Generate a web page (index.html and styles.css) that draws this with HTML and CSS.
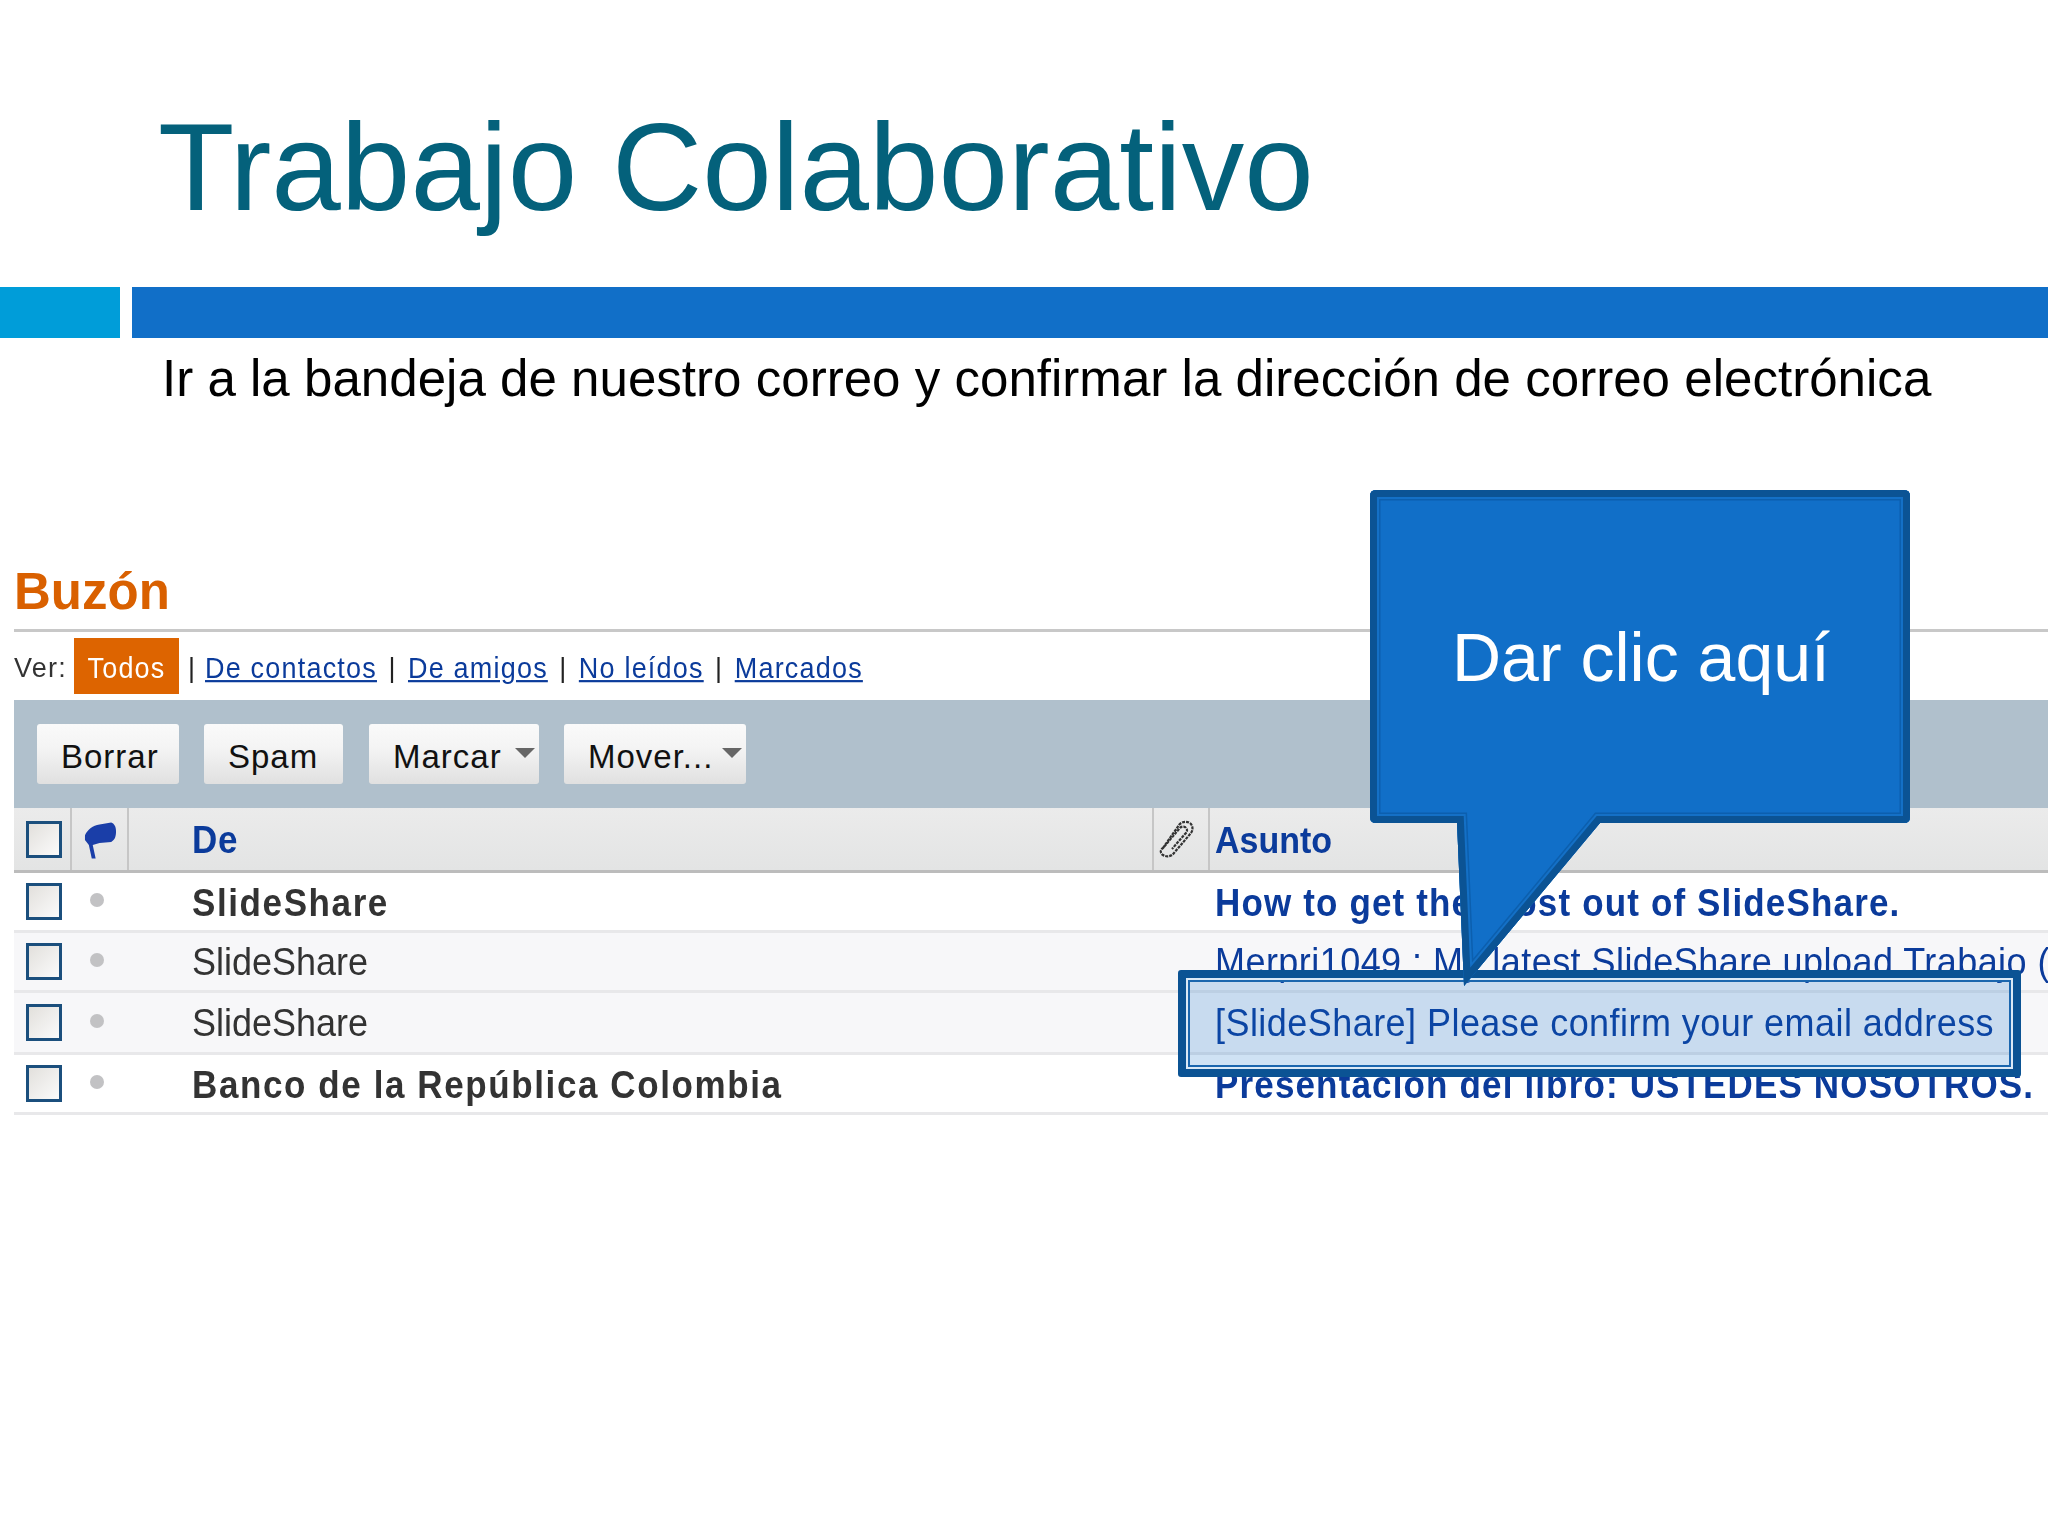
FILE: index.html
```html
<!DOCTYPE html>
<html lang="es">
<head>
<meta charset="utf-8">
<title>Trabajo Colaborativo</title>
<link rel="stylesheet" href="styles.css">
</head>
<body>
<main class="slide">
  <h1 class="title">Trabajo Colaborativo</h1>
  <div class="bars"><div class="bar-a"></div><div class="bar-b"></div></div>
  <p class="subtitle">Ir a la bandeja de nuestro correo y confirmar la dirección de correo electrónica</p>

  <section class="mail">
    <h2 class="mail-title">Buzón</h2>
    <div class="filters">
      <span class="ver">Ver:</span><span class="active"><span class="t">Todos</span></span>
      <span class="sep">|</span><a class="t">De contactos</a>
      <span class="sep">|</span><a class="t">De amigos</a>
      <span class="sep">|</span><a class="t">No leídos</a>
      <span class="sep">|</span><a class="t">Marcados</a>
    </div>
    <div class="toolbar">
      <span class="btn btn-borrar">Borrar</span>
      <span class="btn btn-spam">Spam</span>
      <span class="btn btn-marcar">Marcar<i class="caret"></i></span>
      <span class="btn btn-mover">Mover...<i class="caret"></i></span>
    </div>
    <div class="row head">
      <div class="c-check"><span class="box"></span></div>
      <div class="c-flag">
        <svg class="flag" viewBox="0 0 34 38"><path d="M1 13C4 7 9 3 16 2L28 0C31 1 33 4 33 9C33 14 32 18 28 20L16 21L9 23L12 37L8 37L5 23L1 18Z"/></svg>
      </div>
      <div class="c-from"><span class="t">De</span></div>
      <div class="c-clip">
        <svg class="clip" viewBox="0 0 36 38"><path d="M5 28L21 5C24 1 30 1 33 4C35 7 35 10 33 13L16 33C13 37 8 37 5 35C2 33 2 30 5 28L21 9C23 6 27 6 28 8C30 10 29 12 27 14L14 29"/></svg>
      </div>
      <div class="c-subject"><span class="t">Asunto</span></div>
    </div>
    <div class="row unread">
      <div class="c-check"><span class="box"></span></div>
      <div class="c-flag"><span class="dot"></span></div>
      <div class="c-from"><span class="t">SlideShare</span></div>
      <div class="c-clip"></div>
      <div class="c-subject"><span class="t">How to get the most out of SlideShare.</span></div>
    </div>
    <div class="row read">
      <div class="c-check"><span class="box"></span></div>
      <div class="c-flag"><span class="dot"></span></div>
      <div class="c-from"><span class="t">SlideShare</span></div>
      <div class="c-clip"></div>
      <div class="c-subject"><span class="t">Merpri1049 : My latest SlideShare upload Trabajo (</span></div>
    </div>
    <div class="row read tall">
      <div class="c-check"><span class="box"></span></div>
      <div class="c-flag"><span class="dot"></span></div>
      <div class="c-from"><span class="t">SlideShare</span></div>
      <div class="c-clip"></div>
      <div class="c-subject"><span class="t">[SlideShare] Please confirm your email address</span></div>
    </div>
    <div class="row unread">
      <div class="c-check"><span class="box"></span></div>
      <div class="c-flag"><span class="dot"></span></div>
      <div class="c-from"><span class="t">Banco de la República Colombia</span></div>
      <div class="c-clip"></div>
      <div class="c-subject"><span class="t">Presentación del libro: USTEDES NOSOTROS.</span></div>
    </div>
  </section>

  <div class="highlight"></div>

  <div class="callout">
    <svg class="callout-shape" viewBox="0 0 540 496">
      <defs>
        <path id="shape" d="M6 0H534Q540 0 540 6V327Q540 333 534 333H230L94 496L87 333H6Q0 333 0 327V6Q0 0 6 0Z"/>
        <clipPath id="inside"><use href="#shape"/></clipPath>
      </defs>
      <g clip-path="url(#inside)">
        <use href="#shape" class="s-fill"/>
        <use href="#shape" class="s-thin"/>
        <use href="#shape" class="s-gap"/>
        <use href="#shape" class="s-thick"/>
      </g>
    </svg>
    <span class="callout-text">Dar clic aquí</span>
  </div>
</main>
</body>
</html>
```

FILE: styles.css
```css
* { box-sizing: border-box; }
html, body { margin: 0; padding: 0; background: #fff; }
body { font-family: "Liberation Sans", Arial, sans-serif; }

.slide {
  position: relative;
  width: 2048px;
  height: 1536px;
  overflow: hidden;
  background: #fff;
}

.title {
  margin: 0;
  height: 287px;
  padding: 96px 0 0 158px;
  font-size: 125px;
  line-height: 142px;
  font-weight: 400;
  color: #04617b;
}

.bars { display: flex; gap: 12px; height: 51px; }
.bar-a { width: 120px; background: #009dd9; }
.bar-b { flex: 1; background: #116fc8; }

.subtitle {
  margin: 0;
  padding: 13px 0 0 162px;
  height: 68px;
  font-size: 51.1px;
  line-height: 55px;
  color: #000;
}

.mail {
  margin: 0 0 0 14px;
  padding-top: 158px;
  filter: blur(0.6px);
  color: #333;
}

.t { display: inline-block; transform: scaleY(1.1); }

.mail-title {
  margin: 0;
  height: 68px;
  border-bottom: 3px solid #c8c8c8;
  font-size: 51px;
  line-height: 56px;
  font-weight: 700;
  color: #d96000;
}

.filters {
  display: flex;
  align-items: center;
  height: 68px;
  font-size: 27px;
  letter-spacing: 1.2px;
  color: #333;
}
.ver, .sep, .filters a { margin-top: 4px; }
.ver { width: 60px; }
.active {
  display: flex;
  align-items: center;
  justify-content: center;
  width: 105px;
  height: 56px;
  padding-top: 4px;
  background: #dd6400;
  color: #fff;
}
.sep { width: 26px; text-align: center; color: #222; }
a + .sep { width: 31px; }
.filters a { color: #0b3b9b; text-decoration: underline; }

.toolbar {
  display: flex;
  align-items: center;
  height: 108px;
  padding-left: 23px;
  background: #b0c0cc;
}
.btn {
  position: relative;
  display: flex;
  align-items: center;
  height: 60px;
  padding: 5px 0 0 24px;
  border-radius: 3px;
  background: linear-gradient(#fafafa, #f4f4f4 40%, #e0e0e0);
  font-size: 33px;
  letter-spacing: 1px;
  color: #111;
}
.btn-borrar { width: 142px; margin-right: 25px; }
.btn-spam { width: 139px; margin-right: 26px; }
.btn-marcar { width: 170px; margin-right: 25px; }
.btn-mover { width: 182px; }
.caret {
  position: absolute;
  top: 24px;
  right: 4px;
  width: 20px;
  height: 10px;
  background: #666;
  clip-path: polygon(0 0, 100% 0, 50% 100%);
}

.row {
  display: grid;
  grid-template-columns: 58px 57px 1025px 56px 1fr;
  height: 60px;
  border-bottom: 3px solid #e8e8ea;
  white-space: nowrap;
  overflow: hidden;
}
.row > div { display: flex; align-items: center; min-width: 0; }

.head {
  height: 65px;
  background: linear-gradient(#ebebeb, #e3e4e4);
  border-bottom: 3px solid #bcbcbc;
  font-weight: 700;
}
.head .c-check, .head .c-flag, .head .c-from, .head .c-clip { border-right: 2px solid #c6c6c6; }

.read { background: #f7f7f9; }
.tall { height: 62px; }

.c-check { padding-left: 12px; }
.c-flag { padding-left: 12px; }
.c-from { padding: 2px 0 0 63px; }
.c-subject { padding: 2px 0 0 5px; }
.read .c-from { padding-top: 0; }
.read .c-subject { padding-top: 0; }
.c-clip { padding-left: 4px; }

.box {
  display: block;
  width: 36px;
  height: 37px;
  border: 3px solid #1b4f7d;
  background: linear-gradient(135deg, #e2e0dc, #fbfbfb);
}
.dot {
  display: block;
  width: 14px;
  height: 14px;
  margin: 0 0 3px 6px;
  border-radius: 50%;
  background: #c2c2c4;
}
.flag { display: block; width: 33px; height: 38px; margin-top: 4px; fill: #1a3ea8; }
.clip { display: block; width: 36px; height: 38px; fill: none; stroke: #333; stroke-width: 2.2; stroke-dasharray: 3 1; }

.row .c-from { font-size: 36px; color: #333; }
.row .c-subject { font-size: 36px; letter-spacing: 0.45px; color: #0b3b9b; }
.unread .c-from, .unread .c-subject { font-weight: 700; font-size: 35px; }
.unread .c-from { letter-spacing: 1.6px; }
.unread .c-subject { letter-spacing: 1.15px; }
.head .c-from { color: #0b3b9b; font-size: 35px; letter-spacing: 0.8px; }
.head .c-subject { font-size: 34px; letter-spacing: 0; }

.highlight {
  position: absolute;
  left: 1178px;
  top: 970px;
  width: 843px;
  height: 107px;
  border: 8px solid #0b5394;
  border-radius: 3px;
  background: rgba(15, 111, 198, 0.2);
  box-shadow: inset 0 0 0 2px #dbe9f6, inset 0 0 0 4px #1a66ae;
}

.callout {
  position: absolute;
  left: 1370px;
  top: 490px;
  width: 540px;
  height: 496px;
}
.callout-shape { position: absolute; inset: 0; width: 540px; height: 496px; }
.s-fill { fill: #116fc8; }
.s-thin { fill: none; stroke: #0c5fae; stroke-width: 21; }
.s-gap { fill: none; stroke: #1470c6; stroke-width: 18; }
.s-thick { fill: none; stroke: #0b5394; stroke-width: 14; }
.callout-text {
  position: absolute;
  left: 82px;
  top: 129px;
  font-size: 68px;
  line-height: 77px;
  color: #fff;
}
```
